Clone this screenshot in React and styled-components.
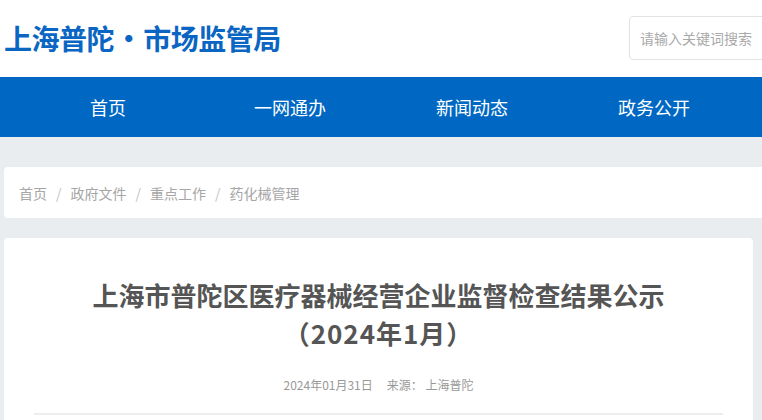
import React from "react";
import styled, { createGlobalStyle } from "styled-components";

const GlobalStyle = createGlobalStyle`
  body {
    margin: 0;
    background: #e9edf0;
    font-family: "Noto Sans CJK SC", "Noto Sans", sans-serif;
  }
`;

const navItems = ["首页", "一网通办", "新闻动态", "政务公开"];
const crumbs = ["首页", "政府文件", "重点工作", "药化械管理"];

const App = () => {
  return (
    <>
      <GlobalStyle />
      <Page>
        <Header>
          <Logo>上海普陀 • 市场监管局</Logo>
          <Search placeholder="请输入关键词搜索" />
        </Header>
        <Nav>
          <NavList>
            {navItems.map((item) => (
              <NavItem key={item}>{item}</NavItem>
            ))}
          </NavList>
        </Nav>
        <Main>
          <Breadcrumb>
            {crumbs.map((c, i) => (
              <React.Fragment key={c}>
                {i > 0 && <Sep>/</Sep>}
                <Crumb>{c}</Crumb>
              </React.Fragment>
            ))}
          </Breadcrumb>
          <Article>
            <Title>
              上海市普陀区医疗器械经营企业监督检查结果公示
              <br />
              <Sub>（2024年1月）</Sub>
            </Title>
            <Meta>
              <span>2024年01月31日</span>
              <span>来源： 上海普陀</span>
            </Meta>
            <Divider />
          </Article>
        </Main>
      </Page>
    </>
  );
};

export default App;

const Page = styled.div`
  width: 100%;
  height: 420px;
  overflow: hidden;
`;
const Header = styled.div`
  height: 77px;
  background: #fff;
  display: flex;
  align-items: center;
  justify-content: space-between;
  padding: 0 0 0 4px;
`;
const Logo = styled.h1`
  margin: 0 0 2px 0;
  font-size: 28px;
  font-weight: 700;
  color: #0a66c2;
  letter-spacing: -0.5px;
  word-spacing: -5px;
  white-space: nowrap;
`;
const Search = styled.input`
  width: 160px;
  height: 44px;
  box-sizing: border-box;
  margin: -2px -27px 0 0;
  border: 1px solid #e2e2e2;
  border-radius: 4px;
  padding: 0 10px;
  font-family: inherit;
  font-size: 14px;
  outline: none;
  &::placeholder {
    color: #a9a9a9;
  }
`;
const Nav = styled.nav`
  height: 60px;
  background: #0068c3;
  display: flex;
  justify-content: center;
`;
const NavList = styled.div`
  display: grid;
  grid-template-columns: repeat(4, 182px);
`;
const NavItem = styled.a`
  display: flex;
  align-items: center;
  justify-content: center;
  color: #fff;
  font-size: 18px;
`;
const Main = styled.div`
  padding: 30px 9px 0 4px;
  display: flex;
  flex-direction: column;
  gap: 20px;
`;
const Breadcrumb = styled.div`
  height: 51px;
  margin-right: -20px;
  background: #fff;
  border-radius: 4px;
  display: flex;
  align-items: center;
  padding: 0 15px;
  font-size: 14px;
  color: #a6a6a6;
`;
const Crumb = styled.span``;
const Sep = styled.span`
  margin: 0 9px;
  color: #c4c4c4;
`;
const Article = styled.div`
  background: #fff;
  border-radius: 4px;
  padding: 38px 30px 0;
  min-height: 200px;
`;
const Title = styled.h2`
  margin: 0;
  text-align: center;
  font-size: 26px;
  line-height: 38px;
  font-weight: 700;
  color: #555;
`;
const Sub = styled.span`
  letter-spacing: 1px;
`;
const Meta = styled.div`
  margin-top: 24px;
  display: flex;
  justify-content: center;
  gap: 14px;
  font-size: 12px;
  color: #999;
`;
const Divider = styled.div`
  margin-top: 20px;
  height: 2px;
  background: #eeeeee;
`;
